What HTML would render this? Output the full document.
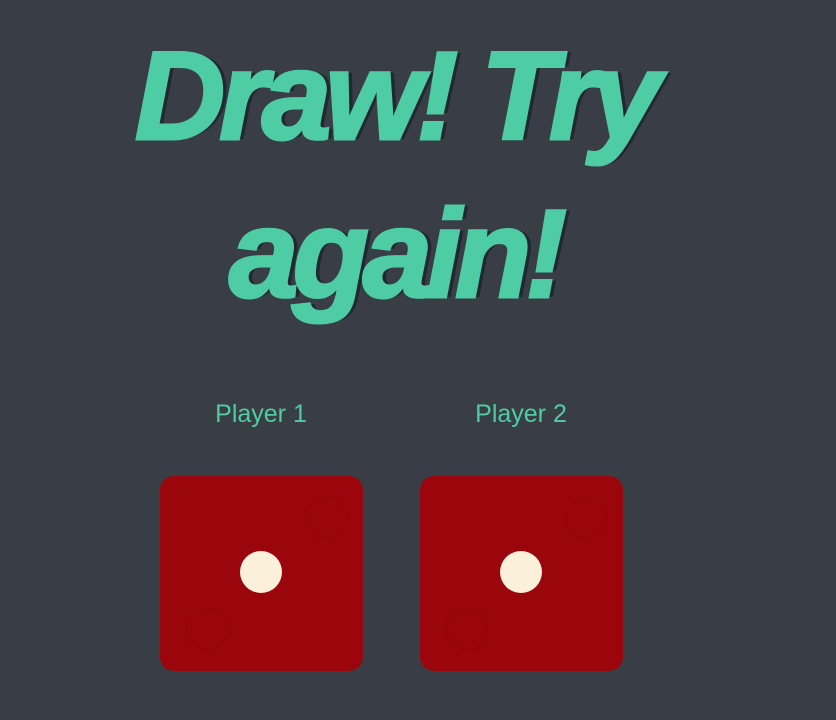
<!DOCTYPE html>
<html><head><style>
html,body{margin:0;padding:0;background:#393E46;width:836px;height:720px;overflow:hidden}
h1{position:absolute;left:0;top:18px;width:790px;margin:0;text-align:center;font-family:"Liberation Sans",sans-serif;font-weight:bold;font-style:italic;font-size:125px;line-height:158px;letter-spacing:-6px;color:#4ECCA3;-webkit-text-stroke:3px #4ECCA3;text-shadow:5px 0 #222831}
.p{position:absolute;top:400px;width:200px;text-align:center;font-family:"Liberation Sans",sans-serif;font-size:25px;font-weight:300;color:#4ECCA3}
.d{position:absolute;top:476px;width:203px;height:195px;background:#9A060C;border-radius:14px}
.dot{position:absolute;width:42px;height:42px;border-radius:50%;}
.c{left:80px;top:75px;background:#FBF0DA}
.g1{left:146px;top:21px;border:1px solid #92070c;width:40px;height:40px}
.g2{left:26px;top:132px;border:1px solid #92070c;width:40px;height:40px}
</style></head><body>
<h1>Draw! Try<br>again!</h1>
<div class="p" style="left:161px">Player 1</div>
<div class="p" style="left:421px">Player 2</div>
<div class="d" style="left:160px"><div class="dot c"></div><div class="dot g1"></div><div class="dot g2"></div></div>
<div class="d" style="left:420px"><div class="dot c"></div><div class="dot g1"></div><div class="dot g2"></div></div>
</body></html>
